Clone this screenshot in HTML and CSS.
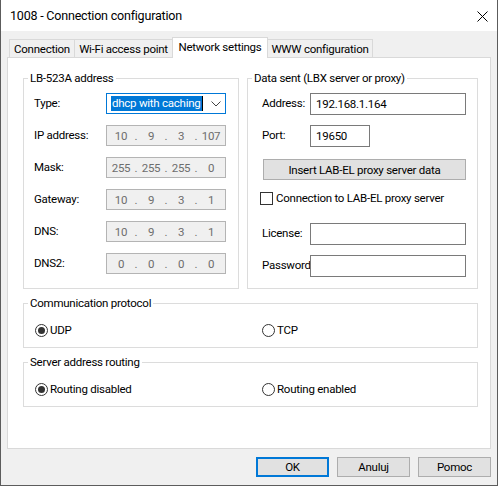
FILE: index.html
```html
<!DOCTYPE html>
<html lang="en">
<head>
<meta charset="UTF-8" />
<title>1008 - Connection configuration</title>
<link rel="stylesheet" href="styles.css">
</head>
<body>

<div class="window">
  <div class="titlebar">
    <span class="title">1008 - Connection configuration</span>
    <svg class="close" width="11" height="11" viewBox="0 0 11 11">
      <path d="M0.5 0.5 L10.5 10.5 M10.5 0.5 L0.5 10.5" stroke="#000" stroke-width="1" fill="none" />
    </svg>
  </div>

  <div class="dialog">
    <div class="tabs">
      <div class="tab tab-conn">Connection</div>
      <div class="tab tab-wifi">Wi-Fi access point</div>
      <div class="tab tab-net active">Network settings</div>
      <div class="tab tab-www">WWW configuration</div>
    </div>

    <div class="panel">
      <div class="top">
        <!-- Device address -->
        <fieldset class="group group-lb">
          <legend>LB-523A address</legend>
          <div class="lb-body">
            <div class="row">
              <span class="label">Type:</span>
              <div class="combo">
                <span class="sel">dhcp with caching</span><span class="caret"></span>
                <svg class="chevron" width="10" height="6" viewBox="0 0 10 6">
                  <polyline points="0.5,0.5 5,5 9.5,0.5" stroke="#444" fill="none" />
                </svg>
              </div>
            </div>
            <div class="row">
              <span class="label">IP address:</span>
              <div class="ip"><span>10</span><i>.</i><span>9</span><i>.</i><span>3</span><i>.</i><span>107</span></div>
            </div>
            <div class="row">
              <span class="label">Mask:</span>
              <div class="ip"><span>255</span><i>.</i><span>255</span><i>.</i><span>255</span><i>.</i><span>0</span></div>
            </div>
            <div class="row">
              <span class="label">Gateway:</span>
              <div class="ip"><span>10</span><i>.</i><span>9</span><i>.</i><span>3</span><i>.</i><span>1</span></div>
            </div>
            <div class="row">
              <span class="label">DNS:</span>
              <div class="ip"><span>10</span><i>.</i><span>9</span><i>.</i><span>3</span><i>.</i><span>1</span></div>
            </div>
            <div class="row">
              <span class="label">DNS2:</span>
              <div class="ip"><span>0</span><i>.</i><span>0</span><i>.</i><span>0</span><i>.</i><span>0</span></div>
            </div>
          </div>
        </fieldset>

        <!-- Server data -->
        <fieldset class="group group-data">
          <legend>Data sent (LBX server or proxy)</legend>
          <div class="data-body">
            <div class="field f-address">
              <span class="label">Address:</span>
              <div class="edit wide">192.168.1.164</div>
            </div>
            <div class="field f-port">
              <span class="label">Port:</span>
              <div class="edit port">19650</div>
            </div>
            <div class="btn btn-insert">Insert LAB-EL proxy server data</div>
            <div class="check">
              <span class="box"></span>
              <span>Connection to LAB-EL proxy server</span>
            </div>
            <div class="field f-license">
              <span class="label">License:</span>
              <div class="edit wide"></div>
            </div>
            <div class="field f-password">
              <span class="label">Password</span>
              <div class="edit wide"></div>
            </div>
          </div>
        </fieldset>
      </div>

      <fieldset class="group group-wide">
        <legend>Communication protocol</legend>
        <div class="radio-body">
          <div class="radio"><span class="dot checked"></span>UDP</div>
          <div class="radio"><span class="dot"></span>TCP</div>
        </div>
      </fieldset>

      <fieldset class="group group-wide">
        <legend>Server address routing</legend>
        <div class="radio-body">
          <div class="radio"><span class="dot checked"></span>Routing disabled</div>
          <div class="radio"><span class="dot"></span>Routing enabled</div>
        </div>
      </fieldset>
    </div>

    <div class="buttons">
      <div class="btn btn-dlg default">OK</div>
      <div class="btn btn-dlg">Anuluj</div>
      <div class="btn btn-dlg">Pomoc</div>
    </div>
  </div>
</div>

</body>
</html>
```

FILE: styles.css
```css
/* Windows dialog look */
body {
  margin: 0;
  font-family: Roboto, "Noto Sans", sans-serif;
  font-size: 11.5px;
  letter-spacing: -0.25px;
  color: #000;
}

.window {
  width: 498px;
  height: 486px;
  box-sizing: border-box;
  border: 1px solid #5c5c5c;
  border-top: none;
  background: #f0f0f0;
  display: flex;
  flex-direction: column;
}

/* Title bar */
.titlebar {
  height: 31px;
  flex: none;
  background: #fff;
  display: flex;
  align-items: center;
  justify-content: space-between;
  padding: 0 9px 0 9px;
}

.title {
  font-size: 12.5px;
  letter-spacing: -0.2px;
  margin-top: -1px;
}

.close {
  margin-top: 1px;
}

.dialog {
  padding: 6px 6px 0 6px;
  display: flex;
  flex-direction: column;
}

/* Tabs */
.tabs {
  display: flex;
  align-items: flex-end;
  height: 20px;
  padding-left: 2px;
}

.tab {
  height: 18px;
  box-sizing: border-box;
  border: 1px solid #d9d9d9;
  border-bottom: none;
  background: #f0f0f0;
  display: flex;
  align-items: center;
  justify-content: center;
  white-space: nowrap;
  padding-top: 1px;
}

.tab + .tab {
  margin-left: -1px;
}

.tab-conn { width: 66px; }
.tab-wifi { width: 99px; }
.tab-net { width: 96px; }
.tab-www { width: 106px; }

.tab.active {
  height: 21px;
  background: #fff;
  margin-bottom: -1px;
  position: relative;
  z-index: 1;
  padding-top: 0;
  padding-bottom: 3px;
}

.panel {
  height: 392px;
  box-sizing: border-box;
  background: #fff;
  border: 1px solid #d9d9d9;
  padding: 13px 12px 0 15px;
}

.top {
  display: flex;
  gap: 8px;
}

/* Group boxes */
.group {
  margin: 0;
  padding: 0 4px;
  border: 1px solid #dcdcdc;
  min-width: 0;
}

.group legend {
  padding: 0 2px;
  line-height: 14px;
}

.group-lb { width: 216px; box-sizing: border-box; }
.group-data { width: 231px; box-sizing: border-box; }

.lb-body {
  padding: 8px 0 14px 6px;
  display: flex;
  flex-direction: column;
  gap: 11px;
}

.row {
  display: flex;
  align-items: center;
  height: 21px;
}

.row .label {
  width: 72px;
  margin-top: -2px;
}

.combo {
  width: 120px;
  height: 21px;
  box-sizing: border-box;
  border: 1px solid #0078d7;
  background: #fff;
  display: flex;
  align-items: center;
  padding-left: 4px;
}

.sel {
  background: #0078d7;
  color: #fff;
  line-height: 15px;
  padding: 0 1px;
}

.caret {
  width: 1px;
  height: 15px;
  background: #000;
}

.chevron {
  margin-left: auto;
  margin-right: 4px;
}

.ip {
  width: 120px;
  height: 21px;
  box-sizing: border-box;
  border: 1px solid #b4b4b4;
  background: #f0f0f0;
  color: #6d6d6d;
  display: grid;
  grid-template-columns: 1fr 8px 1fr 8px 1fr 8px 1fr;
  align-items: center;
  padding: 0 3px;
  text-align: center;
}

.ip i {
  font-style: normal;
}

/* Right group */
.data-body {
  padding: 0 0 0 10px;
  display: flex;
  flex-direction: column;
}

.field {
  display: flex;
  align-items: center;
  height: 22px;
}

.field .label {
  width: 48px;
  margin-top: -2px;
}

.f-address { margin-top: 8px; }
.f-port { margin-top: 10px; }
.f-license { margin-top: 18px; }
.f-password { margin-top: 10px; }

.edit {
  height: 22px;
  box-sizing: border-box;
  border: 1px solid #7a7a7a;
  background: #fff;
  padding-left: 5px;
  display: flex;
  align-items: center;
}

.edit.wide { width: 156px; }
.edit.port { width: 60px; }

.btn {
  box-sizing: border-box;
  background: #e1e1e1;
  border: 1px solid #adadad;
  display: flex;
  align-items: center;
  justify-content: center;
}

.btn-insert {
  width: 203px;
  height: 21px;
  margin: 12px 0 0 1px;
}

.check {
  display: flex;
  align-items: center;
  height: 14px;
  margin: 11px 0 0 -2px;
  gap: 3px;
}

.check .box {
  width: 13px;
  height: 13px;
  box-sizing: border-box;
  border: 1px solid #333;
  background: #fff;
}

/* Radio groups */
.group-wide {
  margin-top: 7px;
}

.radio-body {
  display: grid;
  grid-template-columns: 227px 1fr;
  padding: 13px 0 10px 7px;
}

.radio {
  display: flex;
  align-items: center;
  height: 14px;
  gap: 2px;
}

.dot {
  width: 13px;
  height: 13px;
  box-sizing: border-box;
  border: 1px solid #333;
  border-radius: 50%;
  background: #fff;
  display: flex;
  align-items: center;
  justify-content: center;
}

.dot.checked::after {
  content: "";
  width: 7px;
  height: 7px;
  border-radius: 50%;
  background: #333;
}

/* Dialog buttons */
.buttons {
  display: flex;
  justify-content: flex-end;
  gap: 8px;
  margin-top: 8px;
}

.btn-dlg {
  width: 73px;
  height: 20px;
}

.btn-dlg.default {
  border: 2px solid #0078d7;
}
```
